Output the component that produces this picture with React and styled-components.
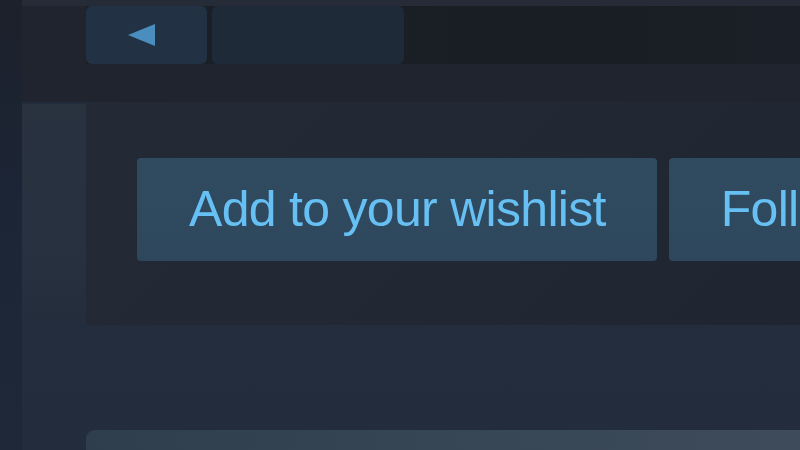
import styled, { createGlobalStyle } from "styled-components";

const Global = createGlobalStyle`
  html, body {
    margin: 0;
    padding: 0;
    background: #212b3b;
  }
  * {
    box-sizing: border-box;
  }
`;

export default function App() {
  return (
    <>
      <Global />
      <Page>
        <Edge />
        <Content>
          <TopArea>
            <TopBar>
              <BackButton aria-label="Back">
                <svg width="30" height="24" viewBox="0 0 30 24">
                  <polygon points="1,12 28,1 28,23" fill="#4a8ebf" />
                </svg>
              </BackButton>
              <Crumb />
            </TopBar>
          </TopArea>
          <Middle>
            <SideBlock />
            <Panel>
              <ButtonRow>
                <ActionButton>Add to your wishlist</ActionButton>
                <ActionButton>Follow</ActionButton>
              </ButtonRow>
            </Panel>
          </Middle>
          <Bottom>
            <Card />
          </Bottom>
        </Content>
      </Page>
    </>
  );
}

const Page = styled.div`
  display: flex;
  width: 800px;
  height: 450px;
  overflow: hidden;
  background: #212b3b;
  font-family: "Liberation Sans", Arial, sans-serif;
`;

const Edge = styled.div`
  width: 22px;
  flex-shrink: 0;
  background: linear-gradient(180deg, #1c212b 0%, #1c2535 40%, #1e2839 100%);
`;

const Content = styled.div`
  flex: 1;
  display: flex;
  flex-direction: column;
  min-width: 0;
  overflow: hidden;
`;

const TopArea = styled.div`
  flex-shrink: 0;
  height: 102px;
  padding: 6px 0 0 64px;
  background: #1f242e;
  box-shadow: inset 0 6px 0 #252b37;
`;

const TopBar = styled.div`
  display: flex;
  gap: 5px;
  height: 58px;
  background: linear-gradient(90deg, #1b2028 0%, #191d24 70%, #1b1f27 100%);
`;

const BackButton = styled.div`
  width: 121px;
  height: 58px;
  border-radius: 6px;
  background: #223143;
  display: flex;
  align-items: center;
  justify-content: center;
  padding-right: 10px;
`;

const Crumb = styled.div`
  width: 192px;
  height: 58px;
  border-radius: 6px;
  background: #1e2a38;
`;

const Middle = styled.div`
  flex-shrink: 0;
  display: grid;
  grid-template-columns: 64px 1fr;
  height: 223px;
`;

const SideBlock = styled.div`
  margin-top: 2px;
  background: linear-gradient(180deg, #29323f 0%, #27313f 60%, #232d3c 100%);
`;

const Panel = styled.div`
  padding: 56px 0 0 51px;
  background: linear-gradient(135deg, #232a36 0%, #212733 50%, #1f2530 100%);
`;

const ButtonRow = styled.div`
  display: flex;
  gap: 12px;
`;

const ActionButton = styled.div`
  flex-shrink: 0;
  height: 103px;
  padding: 0 51px 2px 52px;
  display: flex;
  align-items: center;
  border-radius: 4px;
  background: linear-gradient(180deg, #304b60 0%, #2e475c 100%);
  color: #66c0f4;
  font-size: 50px;
  letter-spacing: -0.7px;
  white-space: nowrap;
`;

const Bottom = styled.div`
  flex: 1;
  padding: 105px 0 0 64px;
  background: linear-gradient(180deg, #232d3e 0%, #222c3c 100%);
`;

const Card = styled.div`
  height: 40px;
  border-top-left-radius: 9px;
  background: linear-gradient(90deg, #2f3e4d 0%, #364655 50%, #3e4b5a 100%);
`;
